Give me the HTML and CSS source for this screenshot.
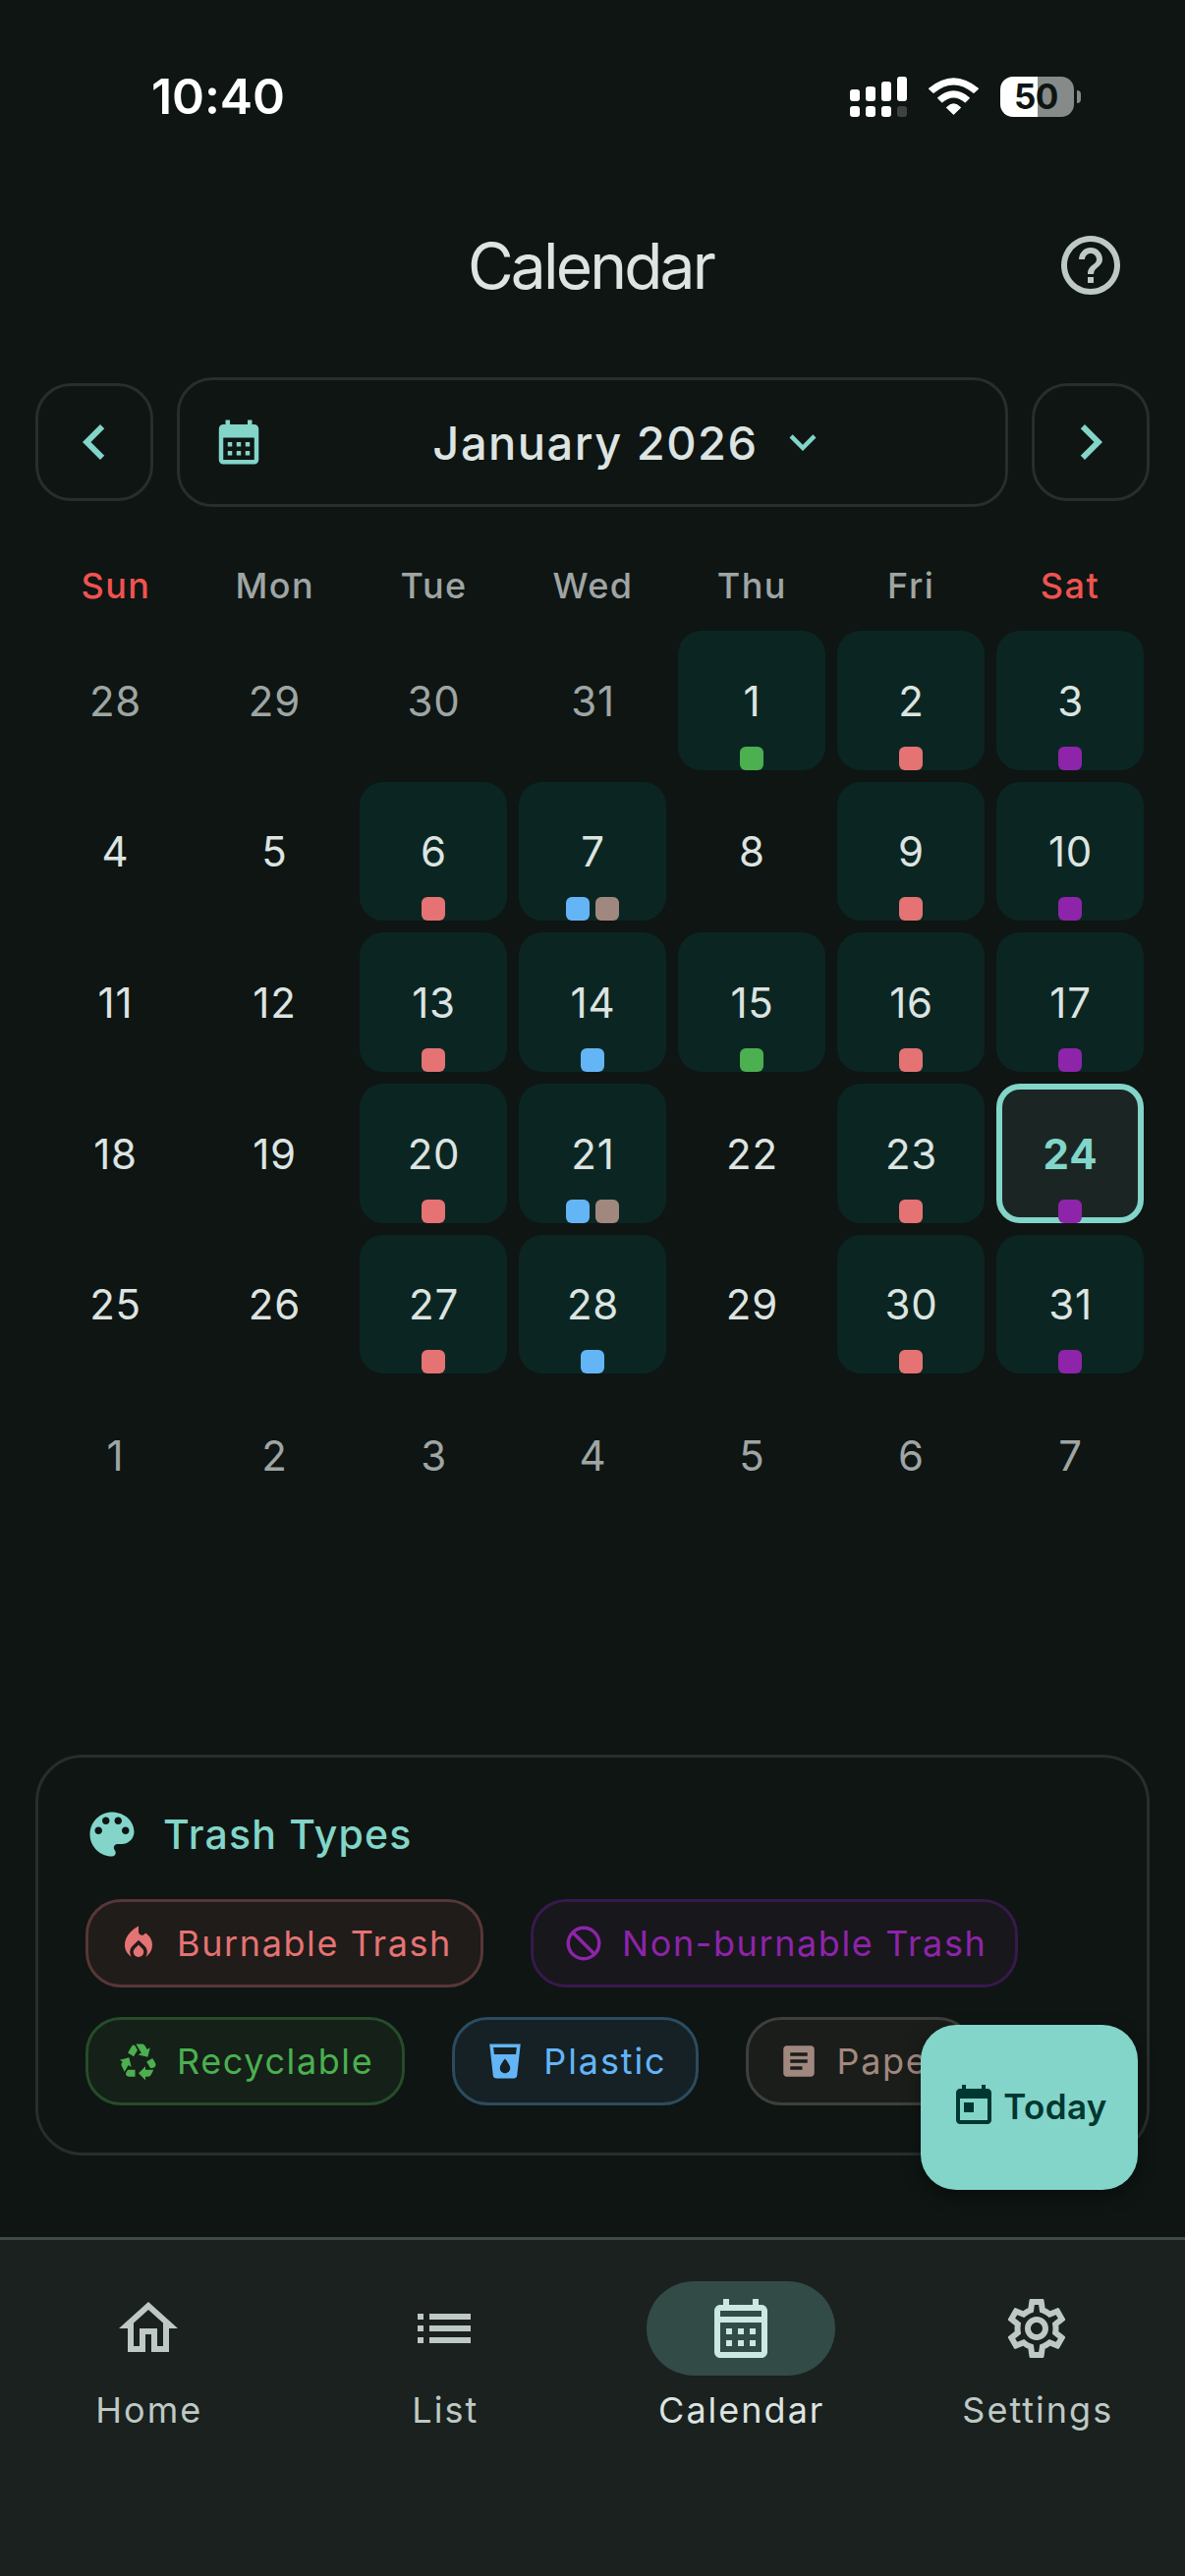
FILE: index.html
```html
<!DOCTYPE html>
<html lang="en">
<head>
    <meta charset="UTF-8">
    <meta name="viewport" content="width=device-width, initial-scale=1.0">
    <title>Calendar</title>
    <link rel="stylesheet" href="styles.css">
</head>
<body>
<div class="app">

    <div class="status-bar">
        <span class="time">10:40</span>
        <div class="status-icons">
            <svg class="signal" viewBox="135 81 174 123">
                <g fill="#fff">
                    <rect x="135" y="120" width="30" height="36" rx="9"/>
                    <rect x="183" y="111" width="30" height="45" rx="9"/>
                    <rect x="231" y="96" width="30" height="60" rx="9"/>
                    <rect x="279" y="81" width="30" height="75" rx="9"/>
                    <rect x="135" y="171" width="30" height="33" rx="9"/>
                    <rect x="183" y="171" width="30" height="33" rx="9"/>
                    <rect x="231" y="171" width="30" height="33" rx="9"/>
                </g>
                <rect x="279" y="171" width="30" height="33" rx="9" fill="#3e4341"/>
            </svg>
            <svg class="wifi" viewBox="375 86 152 112">
                <g fill="#fff" stroke="#fff" stroke-width="4" stroke-linejoin="round">
                    <path d="M451 196L431 176Q451 156 471 176Z"/>
                    <path d="M404 147Q451 107 498 147L486 159Q451 130 416 159Z"/>
                    <path d="M377 119Q451 57 525 119L512 131Q451 80 390 131Z"/>
                </g>
            </svg>
            <div class="battery">
                <span class="battery-level">50</span>
                <span class="battery-cap"></span>
            </div>
        </div>
    </div>

    <header class="app-bar">
        <h1>Calendar</h1>
        <svg class="icon help" viewBox="0 0 24 24"><path d="M11 18h2v-2h-2v2zm1-16C6.48 2 2 6.48 2 12s4.48 10 10 10 10-4.48 10-10S17.52 2 12 2zm0 18c-4.41 0-8-3.59-8-8s3.59-8 8-8 8 3.59 8 8-3.59 8-8 8zm0-14c-2.21 0-4 1.79-4 4h2c0-1.1.9-2 2-2s2 .9 2 2c0 2-3 1.75-3 5h2c0-2.25 3-2.5 3-5 0-2.21-1.79-4-4-4z"/></svg>
    </header>

    <div class="month-nav">
        <button class="arrow"><svg class="icon" viewBox="0 0 24 24"><path d="M15.41 7.41L14 6l-6 6 6 6 1.41-1.41L10.83 12z"/></svg></button>
        <button class="month">
            <svg class="icon" viewBox="0 0 24 24"><path d="M19 4h-1V2h-2v2H8V2H6v2H5c-1.11 0-1.99.9-1.99 2L3 20c0 1.1.89 2 2 2h14c1.1 0 2-.9 2-2V6c0-1.1-.9-2-2-2zm0 16H5V10h14v10zM9 14H7v-2h2v2zm4 0h-2v-2h2v2zm4 0h-2v-2h2v2zm-8 4H7v-2h2v2zm4 0h-2v-2h2v2zm4 0h-2v-2h2v2z"/></svg>
            <span class="month-label">
                <span>January 2026</span>
                <svg class="icon" viewBox="0 0 24 24"><path d="M16.59 8.59L12 13.17 7.41 8.59 6 10l6 6 6-6z"/></svg>
            </span>
        </button>
        <button class="arrow"><svg class="icon" viewBox="0 0 24 24"><path d="M10 6L8.59 7.41 13.17 12l-4.58 4.59L10 18l6-6z"/></svg></button>
    </div>

    <div class="calendar">
        <div class="weekdays">
            <span class="weekend">Sun</span>
            <span>Mon</span>
            <span>Tue</span>
            <span>Wed</span>
            <span>Thu</span>
            <span>Fri</span>
            <span class="weekend">Sat</span>
        </div>
        <div class="days">
            <div class="day other">28</div>
            <div class="day other">29</div>
            <div class="day other">30</div>
            <div class="day other">31</div>
            <div class="day event">1<div class="marks"><i class="green"></i></div></div>
            <div class="day event">2<div class="marks"><i class="red"></i></div></div>
            <div class="day event">3<div class="marks"><i class="purple"></i></div></div>

            <div class="day">4</div>
            <div class="day">5</div>
            <div class="day event">6<div class="marks"><i class="red"></i></div></div>
            <div class="day event">7<div class="marks"><i class="blue"></i><i class="brown"></i></div></div>
            <div class="day">8</div>
            <div class="day event">9<div class="marks"><i class="red"></i></div></div>
            <div class="day event">10<div class="marks"><i class="purple"></i></div></div>

            <div class="day">11</div>
            <div class="day">12</div>
            <div class="day event">13<div class="marks"><i class="red"></i></div></div>
            <div class="day event">14<div class="marks"><i class="blue"></i></div></div>
            <div class="day event">15<div class="marks"><i class="green"></i></div></div>
            <div class="day event">16<div class="marks"><i class="red"></i></div></div>
            <div class="day event">17<div class="marks"><i class="purple"></i></div></div>

            <div class="day">18</div>
            <div class="day">19</div>
            <div class="day event">20<div class="marks"><i class="red"></i></div></div>
            <div class="day event">21<div class="marks"><i class="blue"></i><i class="brown"></i></div></div>
            <div class="day">22</div>
            <div class="day event">23<div class="marks"><i class="red"></i></div></div>
            <div class="day event today">24<div class="marks"><i class="purple"></i></div></div>

            <div class="day">25</div>
            <div class="day">26</div>
            <div class="day event">27<div class="marks"><i class="red"></i></div></div>
            <div class="day event">28<div class="marks"><i class="blue"></i></div></div>
            <div class="day">29</div>
            <div class="day event">30<div class="marks"><i class="red"></i></div></div>
            <div class="day event">31<div class="marks"><i class="purple"></i></div></div>

            <div class="day other">1</div>
            <div class="day other">2</div>
            <div class="day other">3</div>
            <div class="day other">4</div>
            <div class="day other">5</div>
            <div class="day other">6</div>
            <div class="day other">7</div>
        </div>
    </div>

    <div class="legend">
        <h2>
            <svg class="icon" viewBox="0 0 24 24"><path d="M12 3c-4.97 0-9 4.03-9 9s4.03 9 9 9c.83 0 1.5-.67 1.5-1.5 0-.39-.15-.74-.39-1.01-.23-.26-.38-.61-.38-.99 0-.83.67-1.5 1.5-1.5H16c2.76 0 5-2.24 5-5 0-4.42-4.03-8-9-8zm-5.5 9c-.83 0-1.5-.67-1.5-1.5S5.67 9 6.5 9 8 9.67 8 10.5 7.33 12 6.5 12zm3-4C8.67 8 8 7.33 8 6.5S8.67 5 9.5 5s1.5.67 1.5 1.5S10.33 8 9.5 8zm5 0c-.83 0-1.5-.67-1.5-1.5S13.67 5 14.5 5s1.5.67 1.5 1.5S15.33 8 14.5 8zm3 4c-.83 0-1.5-.67-1.5-1.5S16.67 9 17.5 9s1.5.67 1.5 1.5-.67 1.5-1.5 1.5z"/></svg>
            <span>Trash Types</span>
        </h2>
        <div class="chips">
            <div class="chip burnable">
                <svg class="icon" viewBox="0 0 24 24"><path d="M12 12.9l-2.13 2.09C9.31 15.55 9 16.28 9 17.06 9 18.68 10.35 20 12 20s3-1.32 3-2.94c0-.78-.31-1.52-.87-2.07L12 12.9z"/><path d="M16 6l-.44.55C14.38 8.02 12 7.19 12 5.3V2S4 6 4 13c0 2.92 1.56 5.47 3.89 6.86-.56-.79-.89-1.76-.89-2.8 0-1.32.52-2.56 1.47-3.5L12 10.1l3.53 3.47c.95.93 1.47 2.17 1.47 3.5 0 1.02-.31 1.96-.85 2.75 1.89-1.15 3.29-3.06 3.71-5.3.66-3.55-1.07-6.9-3.86-8.52z"/></svg>
                <span>Burnable Trash</span>
            </div>
            <div class="chip nonburnable">
                <svg class="icon outline" viewBox="0 0 24 24"><circle cx="12" cy="12" r="9"/><path d="M5.7 5.7l12.6 12.6"/></svg>
                <span>Non-burnable Trash</span>
            </div>
            <div class="chip recyclable">
                <svg class="icon" viewBox="0 0 24 24"><path d="M5.77 7.15L7.2 4.78l1.03-1.71c.39-.65 1.33-.65 1.72 0l1.48 2.47-1.23 2.06-1 1.62-3.43-2.07zm15.95 5.82l-1.6-2.66-3.46 2L18.87 16H20c.76 0 1.45-.43 1.79-1.11.14-.28.21-.58.21-.89 0-.36-.1-.71-.28-1.03zM16 21h1.5c.76 0 1.45-.43 1.79-1.11L20.74 17H16v-2l-4 4 4 4v-2zm-6-4H5.7l-.84 1.41c-.3.5-.32 1.12-.06 1.65.28.57.87.94 1.52.94H10v-4zm-3.88-2.65l1.73 1.04L6.48 9.9 1 11.27l1.7 1.02-.41.69c-.35.59-.38 1.31-.07 1.92l1.63 3.26 2.27-3.81zm10.9-9.21l-1.3-2.17C15.35 2.37 14.7 2 14 2h-3.53l3.12 5.2-1.72 1.03 5.49 1.37 1.37-5.49-1.71 1.03z"/></svg>
                <span>Recyclable</span>
            </div>
            <div class="chip plastic">
                <svg class="icon" viewBox="0 0 24 24"><path d="M3 2l2.01 18.23C5.13 21.23 5.97 22 7 22h10c1.03 0 1.87-.77 1.99-1.77L21 2H3zm9 17c-1.66 0-3-1.34-3-3 0-2 3-5.4 3-5.4s3 3.4 3 5.4c0 1.66-1.34 3-3 3zm6.33-11H5.67l-.44-4h13.55l-.45 4z"/></svg>
                <span>Plastic</span>
            </div>
            <div class="chip paper">
                <svg class="icon" viewBox="0 0 24 24"><path d="M19 3H5c-1.1 0-2 .9-2 2v14c0 1.1.9 2 2 2h14c1.1 0 2-.9 2-2V5c0-1.1-.9-2-2-2zm-5 14H7v-2h7v2zm3-4H7v-2h10v2zm0-4H7V7h10v2z"/></svg>
                <span>Paper</span>
            </div>
        </div>
        <button class="fab">
            <svg class="icon" viewBox="0 0 24 24"><path d="M19 3h-1V1h-2v2H8V1H6v2H5c-1.11 0-1.99.9-1.99 2L3 19c0 1.1.89 2 2 2h14c1.1 0 2-.9 2-2V5c0-1.1-.9-2-2-2zm0 16H5V8h14v11zM7 10h5v5H7z"/></svg>
            <span>Today</span>
        </button>
    </div>

    <nav class="bottom-nav">
        <a class="nav-item">
            <span class="pill"><svg class="icon" viewBox="0 0 24 24"><path d="M12 5.69l5 4.5V18h-2v-6H9v6H7v-7.81l5-4.5M12 3L2 12h3v8h6v-6h2v6h6v-8h3L12 3z"/></svg></span>
            <span class="nav-label">Home</span>
        </a>
        <a class="nav-item">
            <span class="pill"><svg class="icon" viewBox="0 0 24 24"><path d="M3 13h2v-2H3v2zm0 4h2v-2H3v2zm0-8h2V7H3v2zm4 4h14v-2H7v2zm0 4h14v-2H7v2zM7 7v2h14V7H7z"/></svg></span>
            <span class="nav-label">List</span>
        </a>
        <a class="nav-item active">
            <span class="pill"><svg class="icon" viewBox="0 0 24 24"><path d="M19 4h-1V2h-2v2H8V2H6v2H5c-1.11 0-1.99.9-1.99 2L3 20c0 1.1.89 2 2 2h14c1.1 0 2-.9 2-2V6c0-1.1-.9-2-2-2zm0 16H5V10h14v10zm0-12H5V6h14v2zM9 14H7v-2h2v2zm4 0h-2v-2h2v2zm4 0h-2v-2h2v2zm-8 4H7v-2h2v2zm4 0h-2v-2h2v2zm4 0h-2v-2h2v2z"/></svg></span>
            <span class="nav-label">Calendar</span>
        </a>
        <a class="nav-item">
            <span class="pill"><svg class="icon" viewBox="0 0 24 24"><path d="M19.43 12.98c.04-.32.07-.64.07-.98s-.03-.66-.07-.98l2.11-1.65c.19-.15.24-.42.12-.64l-2-3.46c-.09-.16-.26-.25-.44-.25-.06 0-.12.01-.17.03l-2.49 1c-.52-.4-1.08-.73-1.69-.98l-.38-2.65C14.46 2.18 14.25 2 14 2h-4c-.25 0-.46.18-.49.42l-.38 2.65c-.61.25-1.17.59-1.69.98l-2.49-1c-.06-.02-.12-.03-.18-.03-.17 0-.34.09-.43.25l-2 3.46c-.13.22-.07.49.12.64l2.11 1.65c-.04.32-.07.65-.07.98s.03.66.07.98l-2.11 1.65c-.19.15-.24.42-.12.64l2 3.46c.09.16.26.25.44.25.06 0 .12-.01.17-.03l2.49-1c.52.4 1.08.73 1.69.98l.38 2.65c.03.24.24.42.49.42h4c.25 0 .46-.18.49-.42l.38-2.65c.61-.25 1.17-.59 1.69-.98l2.49 1c.06.02.12.03.18.03.17 0 .34-.09.43-.25l2-3.46c.12-.22.07-.49-.12-.64l-2.11-1.65zm-1.98-1.71c.04.31.05.52.05.73 0 .21-.02.43-.05.73l-.14 1.13.89.7 1.08.84-.7 1.21-1.27-.51-1.04-.42-.9.68c-.43.32-.84.56-1.25.73l-1.06.43-.16 1.13-.2 1.35h-1.4l-.19-1.35-.16-1.13-1.06-.43c-.43-.18-.83-.41-1.23-.71l-.91-.7-1.06.43-1.27.51-.7-1.21 1.08-.84.89-.7-.14-1.13c-.03-.31-.05-.54-.05-.74s.02-.43.05-.73l.14-1.13-.89-.7-1.08-.84.7-1.21 1.27.51 1.04.42.9-.68c.43-.32.84-.56 1.25-.73l1.06-.43.16-1.13.2-1.35h1.39l.19 1.35.16 1.13 1.06.43c.43.18.83.41 1.23.71l.91.7 1.06-.43 1.27-.51.7 1.21-1.07.85-.89.7.14 1.13zM12 8c-2.21 0-4 1.79-4 4s1.79 4 4 4 4-1.79 4-4-1.79-4-4-4zm0 6c-1.1 0-2-.9-2-2s.9-2 2-2 2 .9 2 2-.9 2-2 2z"/></svg></span>
            <span class="nav-label">Settings</span>
        </a>
    </nav>

</div>
</body>
</html>
```
FILE: styles.css
```css
* {
    box-sizing: border-box;
}
body {
    margin: 0;
    background: #0e1513;
    color: #dde4e1;
    font-family: Inter, "Liberation Sans", sans-serif;
}
button {
    background: none;
    border: unset;
    color: inherit;
    font: inherit;
    padding: 0;
}
.icon {
    display: block;
    fill: currentColor;
    flex: none;
}
.icon.outline {
    fill: none;
    stroke: currentColor;
    stroke-width: 2;
}
.app {
    width: 1206px;
    height: 2622px;
    display: flex;
    flex-direction: column;
}

/* status bar */
.status-bar {
    height: 186px;
    padding: 10px 106px 0 154px;
    display: flex;
    align-items: center;
    justify-content: space-between;
    color: #fff;
}
.time {
    font-size: 50px;
    font-weight: 600;
    letter-spacing: -0.1px;
}
.status-icons {
    display: flex;
    align-items: center;
}
.signal {
    width: 58px;
    height: 41px;
}
.wifi {
    width: 51px;
    height: 38px;
    margin: 0 22px;
}
.battery {
    display: flex;
    align-items: center;
    gap: 3px;
}
.battery-level {
    width: 75px;
    height: 41px;
    padding-right: 2px;
    border-radius: 13px;
    background: linear-gradient(90deg, #fff 50.6%, #868b89 50.6%);
    color: #0e1513;
    font-size: 35px;
    font-weight: 700;
    letter-spacing: -0.5px;
    line-height: 41px;
    text-align: center;
}
.battery-cap {
    width: 4px;
    height: 13px;
    border-radius: 0 5px 5px 0;
    background: #868b89;
}

/* title */
.app-bar {
    height: 168px;
    padding: 0 60px 0 132px;
    display: flex;
    align-items: center;
}
.app-bar h1 {
    flex: 1;
    margin: 0;
    padding-right: 4px;
    font-size: 64px;
    font-weight: 400;
    letter-spacing: -2.8px;
    text-align: center;
}
.help {
    width: 72px;
    color: #bec9c5;
}

/* month switcher */
.month-nav {
    margin-top: 30px;
    padding: 0 36px;
    height: 132px;
    display: flex;
    align-items: center;
    gap: 24px;
    color: #82d5c8;
}
.arrow {
    width: 120px;
    height: 120px;
    border: 3px solid #272e2c;
    border-radius: 36px;
    display: flex;
    align-items: center;
    justify-content: center;
}
.arrow .icon {
    width: 72px;
}
.month {
    flex: 1;
    height: 132px;
    padding: 0 33px;
    border: 3px solid #272e2c;
    border-radius: 36px;
    display: flex;
    align-items: center;
    gap: 24px;
}
.month .icon {
    width: 54px;
}
.month-label {
    flex: 1;
    display: flex;
    align-items: center;
    justify-content: center;
    gap: 18px;
    font-size: 47px;
    font-weight: 500;
    letter-spacing: 1.5px;
}
.month-label span {
    color: #dde4e1;
}

/* calendar */
.calendar {
    margin: 42px 36px 0;
    height: 1197px;
}
.weekdays {
    height: 78px;
    padding: 0 0 2px 1px;
    display: grid;
    grid-template-columns: repeat(7, 1fr);
    align-items: center;
    text-align: center;
    font-size: 36px;
    font-weight: 500;
    letter-spacing: 1.5px;
    color: #9fa5a3;
}
.weekdays .weekend {
    color: #ef5350;
}
.days {
    padding: 6px;
    display: grid;
    grid-template-columns: repeat(7, 150px);
    grid-auto-rows: 141.67px;
    gap: 12px;
}
.day {
    position: relative;
    padding: 1px 0 0 1px;
    display: flex;
    align-items: center;
    justify-content: center;
    border-radius: 24px;
    font-size: 42px;
    letter-spacing: 0.8px;
}
.day.other {
    color: #9fa5a3;
}
.day.event {
    background: #0b2622;
}
.day.today {
    background: #1b2624;
    box-shadow: inset 0 0 0 6px #82d5c8;
    color: #82d5c8;
    font-weight: 700;
}
.marks {
    position: absolute;
    left: 0;
    right: 0;
    bottom: 0;
    display: flex;
    justify-content: center;
    gap: 6px;
}
.marks i {
    width: 24px;
    height: 24px;
    border-radius: 6px;
}
.green {
    background: #4caf50;
}
.red {
    background: #e57373;
}
.purple {
    background: #8e24aa;
}
.blue {
    background: #64b5f6;
}
.brown {
    background: #a1887f;
}

/* trash types */
.legend {
    position: relative;
    margin: 31px 36px 0;
    height: 408px;
    padding: 48px 45px 0;
    border: 3px solid #272e2c;
    border-radius: 48px;
}
.legend h2 {
    margin: 0;
    height: 60px;
    display: flex;
    align-items: center;
    gap: 22px;
    font-size: 41px;
    font-weight: 500;
    letter-spacing: 1.2px;
    color: #82d5c8;
}
.legend h2 .icon {
    width: 60px;
}
.chips {
    margin: 36px 3px 0;
    display: flex;
    flex-wrap: wrap;
    gap: 30px 48px;
}
.chip {
    height: 90px;
    padding: 0 29px 1px 30px;
    border: 3px solid;
    border-radius: 36px;
    display: flex;
    align-items: center;
    gap: 18px;
    font-size: 36px;
    letter-spacing: 1.6px;
}
.chip .icon {
    width: 42px;
}
.chip.burnable {
    color: #e57373;
    background: #1f1c1a;
    border-color: #573737;
}
.chip.nonburnable {
    color: #8e24aa;
    background: #18171c;
    border-color: #38194b;
}
.chip.recyclable {
    color: #4caf50;
    background: #142018;
    border-color: #264c2a;
}
.chip.plastic {
    color: #64b5f6;
    background: #152125;
    border-color: #2b4c60;
    letter-spacing: 1.9px;
}
.chip.paper {
    color: #a1887f;
    background: #1a1d1a;
    border-color: #3c3f3b;
}
.fab {
    position: absolute;
    right: 9px;
    bottom: -38px;
    width: 221px;
    height: 168px;
    border-radius: 36px;
    background: #82d5c8;
    box-shadow: 0 6px 18px rgba(0, 0, 0, 0.35);
    color: #003731;
    display: flex;
    align-items: center;
    justify-content: center;
    gap: 6px;
    padding: 0 1px 2px 0;
    font-size: 35px;
    font-weight: 600;
    letter-spacing: 0.4px;
}
.fab .icon {
    width: 48px;
}

/* bottom navigation */
.bottom-nav {
    margin-top: 83px;
    flex: 1;
    padding-top: 42px;
    border-top: 3px solid #3f4946;
    background: #1a211f;
    display: grid;
    grid-template-columns: repeat(4, 1fr);
    color: #bec9c5;
}
.nav-item {
    display: flex;
    flex-direction: column;
    align-items: center;
    gap: 11px;
    font-size: 36px;
    letter-spacing: 2px;
    line-height: 48px;
}
.nav-item.active {
    color: #dde4e1;
}
.nav-label {
    padding-left: 2px;
}
.pill {
    width: 192px;
    height: 96px;
    border-radius: 48px;
    display: flex;
    align-items: center;
    justify-content: center;
}
.pill .icon {
    width: 72px;
}
.active .pill {
    background: #334b47;
    color: #cce8e2;
}
```
